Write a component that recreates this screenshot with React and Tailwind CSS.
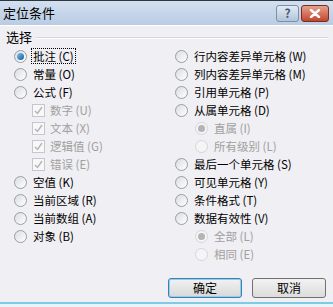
import React from "react";

const font = { fontFamily: '"SimSun", "Noto Sans CJK SC", sans-serif' };

const Radio = ({ checked, disabled }) => (
  <span
    className={`relative inline-flex w-[13px] h-[13px] rounded-full border items-center justify-center shrink-0 ${
      disabled ? "border-[#d3d6da] bg-[#f5f5f5]" : "border-[#9a9ea4] bg-gradient-to-br from-[#d9dde2] to-[#ffffff]"
    }`}
  >
    {checked && (
      <span
        className={`w-[7px] h-[7px] rounded-full ${
          disabled ? "bg-[#b4b4b4]" : "bg-gradient-to-br from-[#7fc4f0] to-[#0d5a9a]"
        }`}
      />
    )}
  </span>
);

const Check = () => (
  <span className="inline-flex w-[13px] h-[13px] border border-[#c4c8cc] bg-[#f8f8f8] items-center justify-center shrink-0">
    <svg width="9" height="9" viewBox="0 0 9 9">
      <path d="M1 5 L3.5 7.5 L8 1" fill="none" stroke="#b4b4b4" strokeWidth="1.4" />
    </svg>
  </span>
);

const Row = ({ children, indent = "" }) => (
  <div className={`h-[18px] flex items-center gap-[4px] ${indent}`}>{children}</div>
);

const RadioRow = ({ label, checked, disabled, indent, focus }) => (
  <Row indent={indent}>
    <Radio checked={checked} disabled={disabled} />
    <span
      className={`text-[11.5px] leading-[14px] px-[1px] ${disabled ? "text-[#a0a0a0]" : "text-black"} ${
        focus ? "border border-dotted border-black" : "border border-transparent"
      }`}
    >
      {label}
    </span>
  </Row>
);

const CheckRow = ({ label }) => (
  <Row indent="pl-[18px]">
    <Check />
    <span className="text-[11.5px] leading-[14px] text-[#a0a0a0] ml-[1px]">{label}</span>
  </Row>
);

export default function App() {
  return (
    <div className="w-[333px] h-[307px] bg-[#f0eff3] flex flex-col overflow-hidden" style={font}>
      <div className="h-[25px] border-t border-[#30363e] bg-gradient-to-b from-[#d3e0ef] to-[#b9cce3] flex items-center justify-between pl-[3px] pr-[4px] shrink-0">
        <span className="text-[13px] text-black">定位条件</span>
        <div className="flex gap-[2px]">
          <div className="w-[23px] h-[17px] rounded-[3px] border border-[#7d90a8] bg-gradient-to-b from-[#e2ebf5] to-[#b2c4da] flex items-center justify-center text-[12px] text-[#4b5a6e] font-bold">
            ?
          </div>
          <div className="w-[28px] h-[17px] rounded-[3px] border border-[#7a2d20] bg-gradient-to-b from-[#e6a08c] to-[#c2452c] flex items-center justify-center">
            <svg width="12" height="9" viewBox="0 0 12 9">
              <path d="M2 1 L10 8 M10 1 L2 8" stroke="white" strokeWidth="2.4" strokeLinecap="round" />
            </svg>
          </div>
        </div>
      </div>
      <div className="flex-1 border-t border-white pl-[14px] pr-[5px] flex flex-col">
        <div className="h-[21px] flex items-center -ml-[8px] gap-[4px]">
          <span className="text-[13px] text-black">选择</span>
          <div className="flex-1 h-[2px] border-t border-[#d6d5da] border-b border-b-white mt-[2px]" />
        </div>
        <div className="flex">
          <div className="w-[161px] flex flex-col">
            <RadioRow label="批注 (C)" checked focus />
            <RadioRow label="常量 (O)" />
            <RadioRow label="公式 (F)" />
            <CheckRow label="数字 (U)" />
            <CheckRow label="文本 (X)" />
            <CheckRow label="逻辑值 (G)" />
            <CheckRow label="错误 (E)" />
            <RadioRow label="空值 (K)" />
            <RadioRow label="当前区域 (R)" />
            <RadioRow label="当前数组 (A)" />
            <RadioRow label="对象 (B)" />
          </div>
          <div className="flex flex-col">
            <RadioRow label="行内容差异单元格 (W)" />
            <RadioRow label="列内容差异单元格 (M)" />
            <RadioRow label="引用单元格 (P)" />
            <RadioRow label="从属单元格 (D)" />
            <RadioRow label="直属 (I)" checked disabled indent="pl-[20px]" />
            <RadioRow label="所有级别 (L)" disabled indent="pl-[20px]" />
            <RadioRow label="最后一个单元格 (S)" />
            <RadioRow label="可见单元格 (Y)" />
            <RadioRow label="条件格式 (T)" />
            <RadioRow label="数据有效性 (V)" />
            <RadioRow label="全部 (L)" checked disabled indent="pl-[20px]" />
            <RadioRow label="相同 (E)" disabled indent="pl-[20px]" />
          </div>
        </div>
        <div className="flex justify-end gap-[10px] mt-[15px] pr-[2px] self-stretch">
          <div className="w-[74px] shrink-0 h-[20px] rounded-[3px] border border-[#3c7fb1] bg-gradient-to-b from-[#f2f2f2] to-[#d8d8d8] text-[12px] text-black shadow-[inset_0_0_0_1px_#8fd0f0] flex items-center justify-center">
            确定
          </div>
          <div className="w-[74px] shrink-0 h-[20px] rounded-[3px] border border-[#707070] bg-gradient-to-b from-[#f2f2f2] to-[#dcdcdc] text-[12px] text-black flex items-center justify-center">
            取消
          </div>
        </div>
      </div>
      <div className="h-[5px] border-t-[2px] border-[#7fcbe4] bg-[#e8f4fa] shrink-0" />
    </div>
  );
}
